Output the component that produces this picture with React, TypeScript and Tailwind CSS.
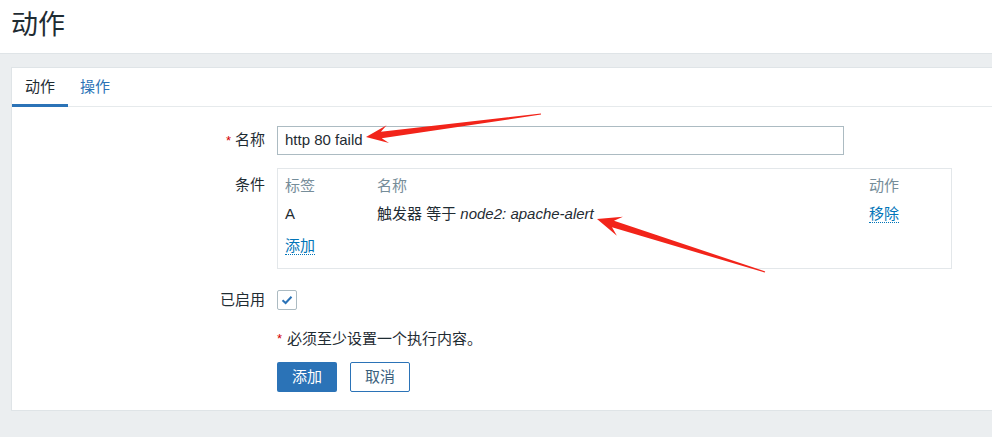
type Pt = [number, number];

// arrow polygon from a tail point to a tip point
function arrowPoints(tail: Pt, tip: Pt, headLen: number, headHalf: number, shaftHalf: number, tailHalf: number) {
  const dx = tail[0] - tip[0];
  const dy = tail[1] - tip[1];
  const len = Math.hypot(dx, dy);
  const ux = dx / len;
  const uy = dy / len;
  const nx = -uy;
  const ny = ux;
  const at = (d: number, w: number): Pt => [tip[0] + ux * d + nx * w, tip[1] + uy * d + ny * w];
  const pts: Pt[] = [
    tip,
    at(headLen, headHalf),
    at(headLen * 0.7, shaftHalf),
    [tail[0] + nx * tailHalf, tail[1] + ny * tailHalf],
    [tail[0] - nx * tailHalf, tail[1] - ny * tailHalf],
    at(headLen * 0.7, -shaftHalf),
    at(headLen, -headHalf),
  ];
  return pts.map((p) => `${p[0].toFixed(1)},${p[1].toFixed(1)}`).join(" ");
}

const font = { fontFamily: '"Liberation Sans", "Noto Sans CJK SC", sans-serif' };

export default function App() {
  return (
    <div
      className="relative w-[992px] h-[437px] overflow-hidden bg-[#ebeef0] text-[#1f2c33] text-[15px]"
      style={font}
    >
      {/* Header */}
      <div className="h-[54px] bg-white border-b border-[#dfe4e7] pl-[11px] pt-[7px]">
        <h1 className="text-[27px] leading-[36px] font-normal text-[#1f2c33]">动作</h1>
      </div>

      {/* Panel */}
      <div className="mt-[13px] ml-[11px] w-[1000px] h-[344px] bg-white border border-[#dfe4e7]">
        {/* Tabs */}
        <div className="flex h-[39px] border-b border-[#e6eaec]">
          <div className="relative w-[56px] flex items-center justify-center leading-[18px]">
            动作
            <div className="absolute left-0 right-0 bottom-[-1px] h-[3px] bg-[#2b73b7]" />
          </div>
          <div className="px-[12px] flex items-center text-[#2b73b7] leading-[18px]">操作</div>
        </div>

        {/* Form */}
        <div className="pt-[19px] grid grid-cols-[253px_1fr] gap-x-3">
          {/* 名称 */}
          <div className="h-[29px] flex items-center justify-end">
            <span className="text-[#d40000] mr-[4px] text-[13px]">*</span>名称
          </div>
          <div className="h-[29px] w-[567px] border border-[#acbbc2] flex items-center px-[7px]">
            http 80 faild
          </div>

          {/* 条件 */}
          <div className="mt-[13px] pt-[8px] h-[26px] flex items-start justify-end leading-[18px]">条件</div>
          <div className="mt-[13px] w-[675px] h-[101px] border border-[#e3e7ea] pl-[7px] pt-[8px]">
            <div className="flex h-[18px] leading-[18px] text-[#768d99]">
              <div className="w-[92px]">标签</div>
              <div className="w-[492px]">名称</div>
              <div>动作</div>
            </div>
            <div className="flex h-[18px] leading-[18px] mt-[10px]">
              <div className="w-[92px]">A</div>
              <div className="w-[492px]">
                触发器 等于 <i className="italic">node2: apache-alert</i>
              </div>
              <div>
                <span className="text-[#0275b8] border-b border-dotted border-[#0275b8]">移除</span>
              </div>
            </div>
            <div className="h-[18px] leading-[18px] mt-[14px]">
              <span className="text-[#0275b8] border-b border-dotted border-[#0275b8]">添加</span>
            </div>
          </div>

          {/* 已启用 */}
          <div className="mt-[21px] h-[20px] flex items-center justify-end">已启用</div>
          <div className="mt-[21px] h-[20px]">
            <div className="w-[20px] h-[20px] border border-[#acbbc2] rounded-[2px] flex items-center justify-center">
              <svg width="14" height="14" viewBox="0 0 14 14">
                <path d="M2.5 7.2 L5.6 10 L11.5 3.8" fill="none" stroke="#2b73b7" strokeWidth="2" />
              </svg>
            </div>
          </div>

          {/* note */}
          <div />
          <div className="mt-[21px] h-[16px] flex items-center leading-[16px]">
            <span className="text-[#d40000] mr-[5px] text-[13px]">*</span>必须至少设置一个执行内容。
          </div>

          {/* buttons */}
          <div />
          <div className="mt-[15px] flex gap-[13px]">
            <button className="w-[60px] h-[30px] rounded-[2px] bg-[#2b73b7] text-white">添加</button>
            <button className="w-[60px] h-[30px] rounded-[2px] bg-white border border-[#2b73b7] text-[#3d5f7d]">
              取消
            </button>
          </div>
        </div>
      </div>

      {/* red annotation arrows */}
      <svg className="absolute top-0 left-0 pointer-events-none" width="992" height="437">
        <polygon points={arrowPoints([541, 114], [366, 137], 22, 9, 3.2, 0.6)} fill="#f2241a" />
        <polygon points={arrowPoints([765, 272], [597, 219], 24, 10, 3.4, 0.6)} fill="#f2241a" />
      </svg>
    </div>
  );
}
